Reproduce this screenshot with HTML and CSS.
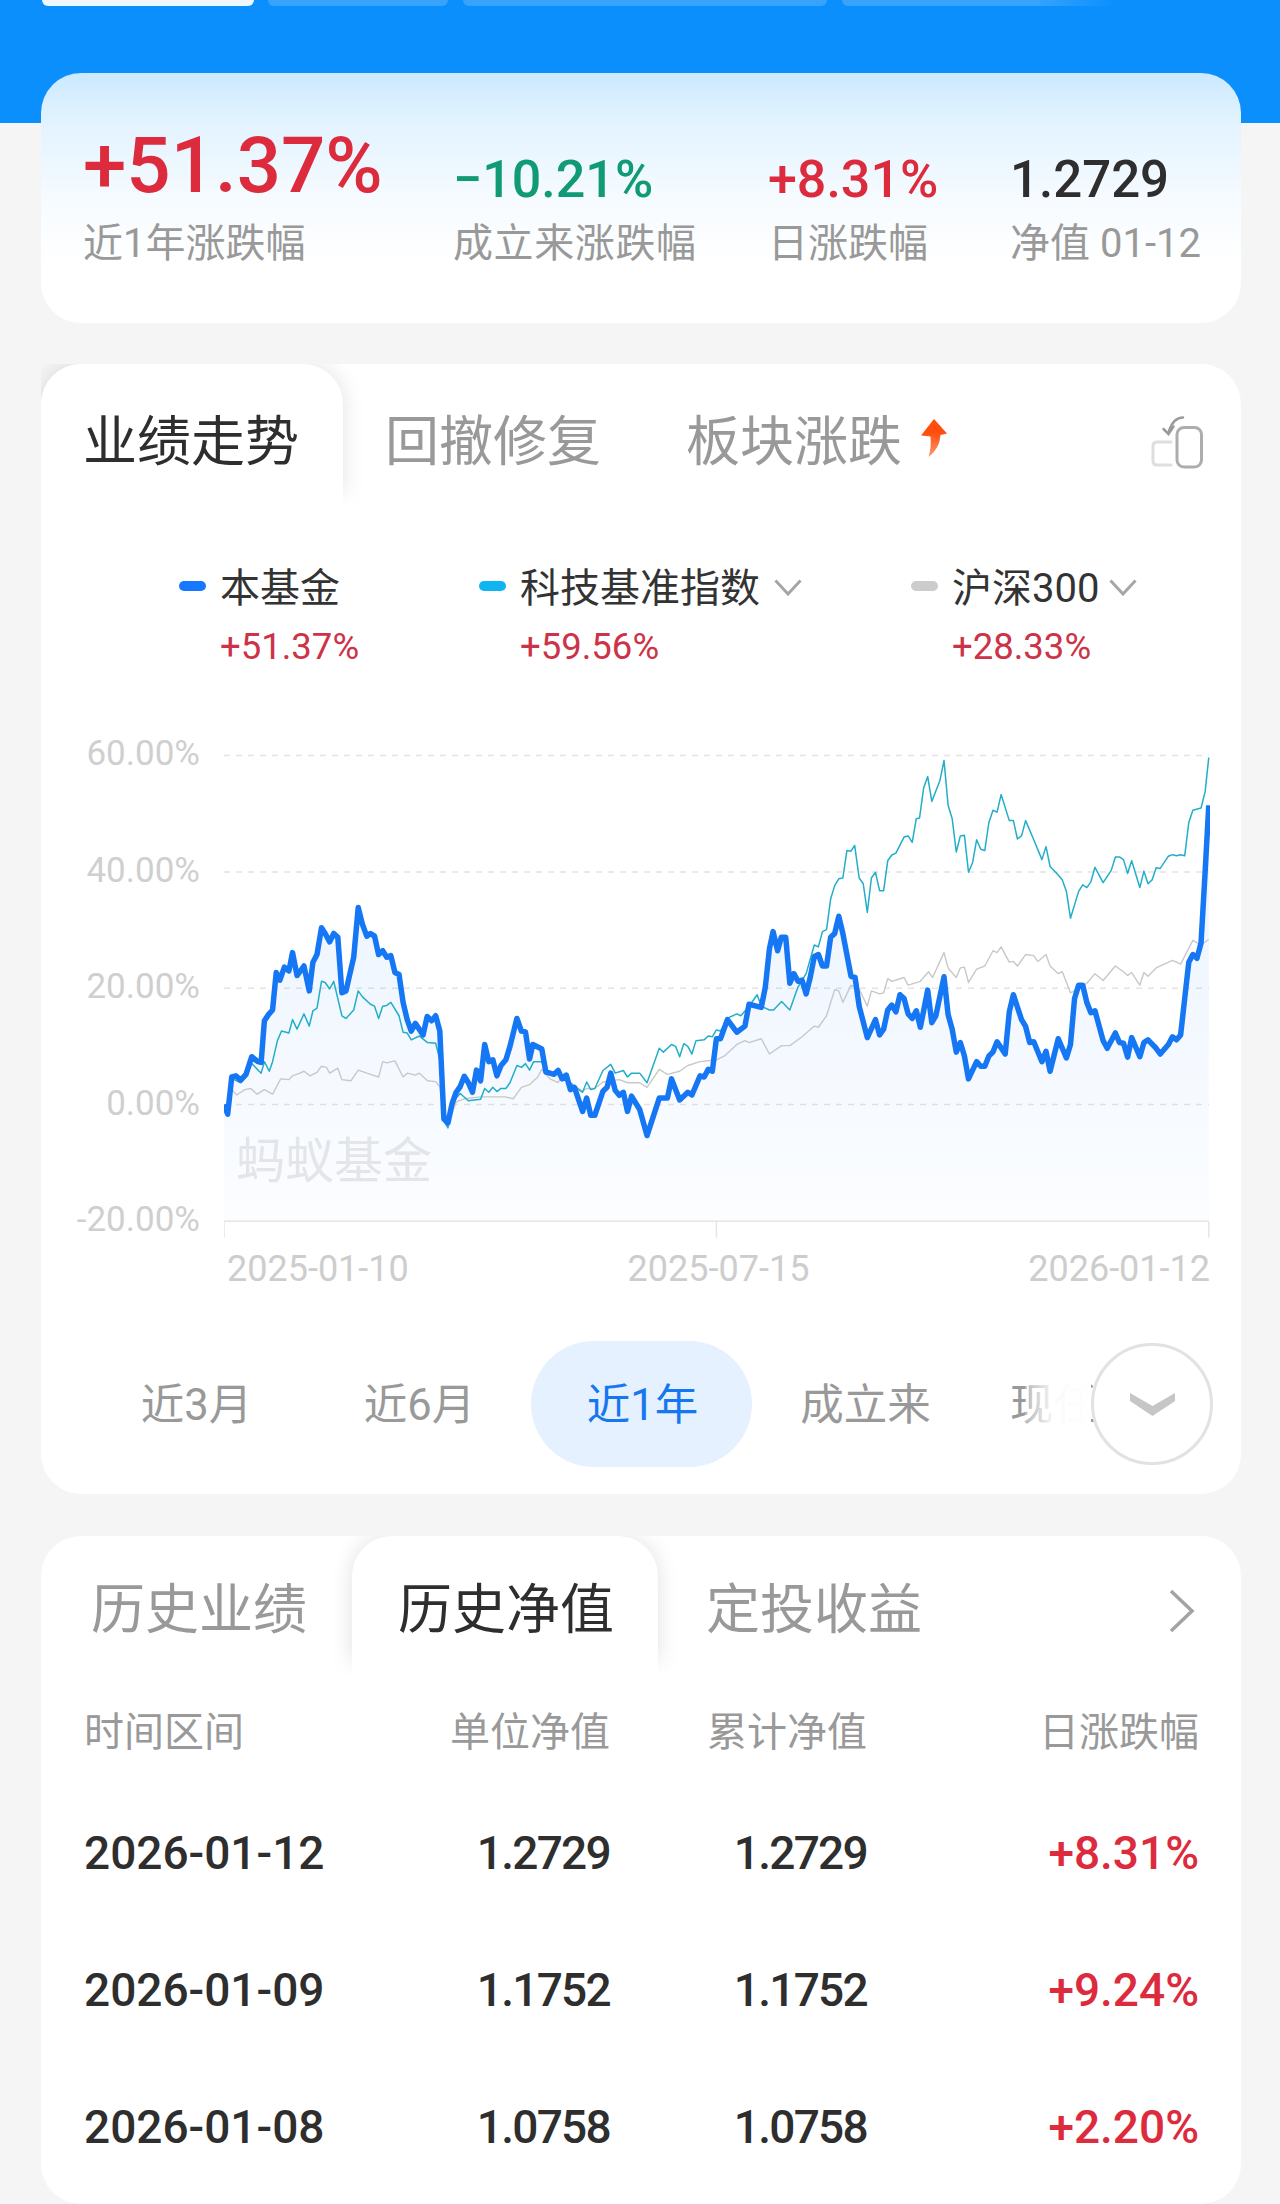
FILE: index.html
```html
<!DOCTYPE html>
<html lang="zh-CN">
<head>
  <meta charset="UTF-8">
  <title>基金详情</title>
  <link rel="stylesheet" href="styles.css">
</head>
<body>

<div class="cabecera">
  <div class="pestanas">
    <span class="pestana activa"></span>
    <span class="pestana ancho-180"></span>
    <span class="pestana ancho-364"></span>
    <span class="pestana ultima"></span>
  </div>
</div>

<section class="tarjeta resumen">
  <div class="dato col-1">
    <div class="valor grande rojo">+51.37%</div>
    <div class="etiqueta">近1年涨跌幅</div>
  </div>
  <div class="dato col-2">
    <div class="valor verde">−10.21%</div>
    <div class="etiqueta">成立来涨跌幅</div>
  </div>
  <div class="dato col-3">
    <div class="valor rojo">+8.31%</div>
    <div class="etiqueta">日涨跌幅</div>
  </div>
  <div class="dato col-4">
    <div class="valor oscuro">1.2729</div>
    <div class="etiqueta">净值 01-12</div>
  </div>
</section>

<section class="tarjeta grafica">
  <div class="tabs tabs-grafica">
    <div class="tab on primera">业绩走势</div>
    <div class="tab segunda">回撤修复</div>
    <div class="tab tercera">板块涨跌</div>
    <svg class="flecha" viewBox="0 0 28 40" width="28" height="40">
      <defs>
        <linearGradient id="naranja" x1="0" y1="0" x2="0" y2="1">
          <stop offset="0.35" stop-color="#ff4d0d"/>
          <stop offset="1" stop-color="#ff9a70"/>
        </linearGradient>
      </defs>
      <path d="M14 1 L27 15.500 L20.500 17 C20 26 16 33 8.500 39 C11 31 11 24 10.500 18.500 L1 17.500 Z" fill="url(#naranja)"/>
    </svg>
    <svg class="girar" viewBox="0 0 54 56" width="54" height="56" fill="none" stroke-linecap="round">
      <rect x="26" y="13.500" width="24.500" height="39.500" rx="7" stroke="#adadad" stroke-width="3"/>
      <path d="M20 28 H6 Q2 28 2 32 V47 Q2 51 6 51 H20" stroke="#dedede" stroke-width="3"/>
      <path d="M32 3.500 C25 3.500 21 8 18 17" stroke="#9a9a9a" stroke-width="2.500"/>
      <path d="M12.500 15 L17.500 20 L22.500 12.500" stroke="#9a9a9a" stroke-width="2.500"/>
    </svg>
  </div>

  <div class="leyenda">
    <div class="serie s1">
      <span class="punto azul"></span>
      <span class="nombre">本基金</span>
      <span class="cambio">+51.37%</span>
    </div>
    <div class="serie s2">
      <span class="punto cian"></span>
      <span class="nombre">科技基准指数
        <svg class="bajar" viewBox="0 0 28 17" width="28" height="17"><path d="M1.500 1.500 L14 15 L26.500 1.500" fill="none" stroke="#a6a6a6" stroke-width="3"/></svg>
      </span>
      <span class="cambio">+59.56%</span>
    </div>
    <div class="serie s3">
      <span class="punto gris"></span>
      <span class="nombre">沪深300
        <svg class="bajar" viewBox="0 0 28 17" width="28" height="17"><path d="M1.500 1.500 L14 15 L26.500 1.500" fill="none" stroke="#a6a6a6" stroke-width="3"/></svg>
      </span>
      <span class="cambio">+28.33%</span>
    </div>
  </div>

  <div class="zona-grafica">
    <div class="eje-y">
      <span>60.00%</span>
      <span>40.00%</span>
      <span>20.00%</span>
      <span>0.00%</span>
      <span>-20.00%</span>
    </div>
    <div class="plano">
      <svg class="lineas" viewBox="549 -8 2417 1419" preserveAspectRatio="none">
        <defs>
          <linearGradient id="relleno" x1="0" y1="0" x2="0" y2="1">
            <stop offset="0" stop-color="#1677ff" stop-opacity="0.09"/>
            <stop offset="1" stop-color="#1677ff" stop-opacity="0.015"/>
          </linearGradient>
        </defs>
        <g class="rejilla">
          <line x1="549" y1="145" x2="2963" y2="145"/>
          <line x1="549" y1="449" x2="2963" y2="449"/>
          <line x1="549" y1="753" x2="2963" y2="753"/>
          <line x1="549" y1="1057" x2="2963" y2="1057"/>
        </g>
        <polygon fill="url(#relleno)" points="549,1362 549,1057 558,1082 568,985 578,982 590,993 603,978 617,932 632,945 640,947 648,838 658,822 668,810 677,712 686,732 697,698 708,708 717,660 728,720 745,695 758,760 767,685 777,665 788,595 797,610 808,632 818,610 828,620 838,765 848,760 867,672 878,542 888,585 899,617 908,610 918,617 928,665 938,655 948,672 958,668 968,712 978,717 988,790 998,835 1008,865 1018,845 1037,875 1047,827 1058,838 1068,825 1078,865 1088,1095 1098,1105 1108,1055 1118,1025 1128,1010 1138,983 1148,1000 1158,1025 1168,967 1178,995 1188,900 1198,945 1208,940 1218,982 1228,955 1240,940 1250,905 1267,832 1278,865 1288,867 1298,938 1306,900 1328,912 1338,972 1348,975 1358,978 1368,968 1378,990 1388,980 1398,1018 1408,1012 1428,1075 1438,1040 1448,1085 1458,1085 1478,1022 1488,1012 1497,975 1508,1020 1518,1033 1528,1025 1538,1075 1548,1035 1568,1070 1586,1138 1616,1040 1636,1040 1646,990 1666,1045 1686,1025 1696,1032 1716,982 1726,985 1736,965 1746,970 1756,885 1766,885 1783,835 1806,868 1826,852 1836,795 1866,803 1876,750 1886,650 1895,605 1906,655 1915,620 1926,620 1936,740 1946,715 1956,735 1966,732 1976,768 1986,725 1996,670 2006,665 2016,695 2026,695 2036,620 2046,610 2056,565 2066,610 2086,722 2096,725 2106,800 2126,882 2146,835 2156,875 2166,860 2176,810 2186,797 2196,815 2206,770 2216,780 2226,820 2236,832 2246,812 2256,855 2274,758 2284,843 2294,825 2314,723 2324,822 2334,860 2344,920 2354,895 2364,930 2374,990 2394,945 2404,957 2414,957 2424,930 2434,920 2444,893 2464,925 2474,815 2484,770 2504,835 2514,853 2524,895 2534,893 2554,945 2564,918 2574,970 2594,885 2614,935 2624,900 2634,780 2644,745 2654,745 2664,790 2674,817 2684,812 2704,890 2714,910 2734,870 2744,895 2754,897 2764,933 2774,882 2794,932 2804,895 2814,888 2834,910 2844,925 2864,900 2874,880 2884,888 2894,875 2904,780 2914,685 2924,665 2934,675 2944,635 2954,450 2963,275 2963,1362"/>
        <polyline class="linea gris-l" points="570,1020 580,1032 600,1018 615,1015 630,1030 648,1018 668,1030 688,990 708,992 717,982 735,975 745,970 760,982 777,973 788,957 800,960 808,975 828,962 838,992 860,995 878,967 908,978 928,985 938,945 948,948 968,943 988,985 998,975 1018,980 1028,975 1048,995 1068,997 1078,1010 1088,1090 1098,1110 1118,1050 1138,1042 1178,1037 1238,1037 1258,1042 1278,1012 1298,1005 1318,985 1328,965 1348,990 1368,1000 1378,980 1398,1000 1428,1022 1438,1015 1458,1015 1478,998 1518,992 1538,1000 1568,1000 1586,1012 1616,965 1636,978 1666,970 1686,955 1716,945 1756,940 1776,930 1806,900 1826,890 1836,895 1866,885 1886,925 1916,903 1936,903 1966,880 1996,852 2006,855 2026,825 2046,757 2056,760 2066,790 2086,745 2106,755 2126,800 2136,760 2156,768 2166,765 2176,728 2186,735 2216,725 2226,745 2256,735 2276,710 2286,725 2314,660 2324,700 2344,725 2354,700 2364,698 2374,738 2394,703 2414,695 2434,655 2444,660 2454,645 2474,685 2484,683 2494,695 2514,665 2534,668 2544,683 2564,665 2574,695 2594,715 2604,710 2624,765 2644,755 2664,740 2684,715 2704,733 2734,695 2754,710 2764,720 2774,712 2794,745 2804,712 2814,722 2834,700 2874,680 2894,690 2924,628 2944,640 2963,625"/>
        <polyline class="linea cian-l" points="570,990 590,1000 603,985 617,950 640,975 648,945 660,970 668,945 680,890 690,865 708,870 717,835 728,860 745,820 758,852 767,812 777,805 788,735 797,738 808,755 818,735 838,825 848,832 867,810 878,760 888,775 908,795 918,800 928,832 938,800 948,798 958,790 978,825 988,868 998,870 1008,888 1028,878 1048,895 1068,897 1078,940 1088,1100 1098,1118 1108,1060 1118,1040 1128,1028 1148,1047 1178,1043 1188,1015 1198,1025 1208,1012 1218,1023 1228,1015 1240,1015 1250,1000 1267,955 1278,960 1288,950 1298,967 1308,945 1328,945 1338,972 1368,975 1388,990 1408,1010 1428,1025 1438,998 1448,1018 1458,1015 1478,968 1497,952 1508,975 1528,968 1538,985 1548,975 1568,975 1586,1000 1616,910 1626,920 1646,900 1656,905 1666,932 1676,898 1686,905 1696,925 1706,890 1726,888 1736,878 1746,880 1756,862 1766,865 1786,830 1806,820 1816,825 1836,800 1856,770 1866,800 1886,810 1896,810 1916,788 1936,810 1956,750 1976,715 1996,640 2006,645 2016,605 2026,600 2036,520 2046,485 2056,467 2066,465 2076,393 2086,395 2095,380 2106,465 2116,480 2126,555 2136,465 2146,450 2156,498 2166,498 2176,420 2186,405 2196,400 2216,358 2226,355 2236,372 2246,310 2254,308 2264,230 2274,200 2284,265 2304,210 2314,158 2324,275 2334,310 2344,397 2354,355 2364,353 2374,450 2384,425 2394,365 2404,390 2414,393 2424,320 2434,288 2444,293 2454,247 2474,315 2484,315 2494,363 2504,355 2514,315 2534,365 2554,417 2564,383 2574,435 2594,457 2604,470 2614,500 2624,570 2644,500 2654,483 2664,490 2674,475 2684,437 2704,477 2724,445 2734,410 2744,410 2754,417 2764,453 2774,420 2794,490 2804,447 2814,480 2824,470 2834,438 2844,440 2864,408 2874,404 2884,407 2894,404 2904,407 2914,320 2924,288 2944,282 2954,240 2963,150"/>
        <polyline class="linea azul-l" points="549,1057 558,1082 568,985 578,982 590,993 603,978 617,932 632,945 640,947 648,838 658,822 668,810 677,712 686,732 697,698 708,708 717,660 728,720 745,695 758,760 767,685 777,665 788,595 797,610 808,632 818,610 828,620 838,765 848,760 867,672 878,542 888,585 899,617 908,610 918,617 928,665 938,655 948,672 958,668 968,712 978,717 988,790 998,835 1008,865 1018,845 1037,875 1047,827 1058,838 1068,825 1078,865 1088,1095 1098,1105 1108,1055 1118,1025 1128,1010 1138,983 1148,1000 1158,1025 1168,967 1178,995 1188,900 1198,945 1208,940 1218,982 1228,955 1240,940 1250,905 1267,832 1278,865 1288,867 1298,938 1306,900 1328,912 1338,972 1348,975 1358,978 1368,968 1378,990 1388,980 1398,1018 1408,1012 1428,1075 1438,1040 1448,1085 1458,1085 1478,1022 1488,1012 1497,975 1508,1020 1518,1033 1528,1025 1538,1075 1548,1035 1568,1070 1586,1138 1616,1040 1636,1040 1646,990 1666,1045 1686,1025 1696,1032 1716,982 1726,985 1736,965 1746,970 1756,885 1766,885 1783,835 1806,868 1826,852 1836,795 1866,803 1876,750 1886,650 1895,605 1906,655 1915,620 1926,620 1936,740 1946,715 1956,735 1966,732 1976,768 1986,725 1996,670 2006,665 2016,695 2026,695 2036,620 2046,610 2056,565 2066,610 2086,722 2096,725 2106,800 2126,882 2146,835 2156,875 2166,860 2176,810 2186,797 2196,815 2206,770 2216,780 2226,820 2236,832 2246,812 2256,855 2274,758 2284,843 2294,825 2314,723 2324,822 2334,860 2344,920 2354,895 2364,930 2374,990 2394,945 2404,957 2414,957 2424,930 2434,920 2444,893 2464,925 2474,815 2484,770 2504,835 2514,853 2524,895 2534,893 2554,945 2564,918 2574,970 2594,885 2614,935 2624,900 2634,780 2644,745 2654,745 2664,790 2674,817 2684,812 2704,890 2714,910 2734,870 2744,895 2754,897 2764,933 2774,882 2794,932 2804,895 2814,888 2834,910 2844,925 2864,900 2874,880 2884,888 2894,875 2904,780 2914,685 2924,665 2934,675 2944,635 2954,450 2963,275"/>
        <g class="eje-x">
          <line x1="549" y1="1362" x2="2963" y2="1362"/>
          <line x1="549" y1="1362" x2="549" y2="1405"/>
          <line x1="1756" y1="1362" x2="1756" y2="1405"/>
          <line x1="2963" y1="1362" x2="2963" y2="1405"/>
        </g>
      </svg>
      <div class="marca">蚂蚁基金</div>
      <div class="fechas">
        <span>2025-01-10</span>
        <span>2025-07-15</span>
        <span>2026-01-12</span>
      </div>
    </div>
  </div>

  <div class="periodos">
    <div class="periodo">近3月</div>
    <div class="periodo">近6月</div>
    <div class="periodo sel">近1年</div>
    <div class="periodo">成立来</div>
    <div class="periodo resto">现任经理</div>
    <div class="desvanecer"></div>
    <div class="circulo">
      <svg viewBox="0 0 45 23" width="45" height="23"><polygon points="0,0 22.500,13 45,0 45,8 22.500,23 0,8" fill="#c6c6c6"/></svg>
    </div>
  </div>
</section>

<section class="tarjeta historia">
  <div class="tabs tabs-historia">
    <div class="tab h-primera">历史业绩</div>
    <div class="tab on h-activa">历史净值</div>
    <div class="tab h-tercera">定投收益</div>
    <svg class="seguir" viewBox="0 0 28 44" width="28" height="44"><path d="M3 2 L24 22 L3 42" fill="none" stroke="#a3a3a3" stroke-width="3.500"/></svg>
  </div>

  <div class="fila cabeza">
    <div>时间区间</div>
    <div>单位净值</div>
    <div>累计净值</div>
    <div>日涨跌幅</div>
  </div>
  <div class="fila">
    <div>2026-01-12</div>
    <div class="neto">1.2729</div>
    <div class="neto">1.2729</div>
    <div class="rojo">+8.31%</div>
  </div>
  <div class="fila">
    <div>2026-01-09</div>
    <div class="neto">1.1752</div>
    <div class="neto">1.1752</div>
    <div class="rojo">+9.24%</div>
  </div>
  <div class="fila">
    <div>2026-01-08</div>
    <div class="neto">1.0758</div>
    <div class="neto">1.0758</div>
    <div class="rojo">+2.20%</div>
  </div>
</section>

</body>
</html>
```

FILE: styles.css
```css
* {
  box-sizing: border-box;
}
html, body {
  margin: 0;
  padding: 0;
}
body {
  width: 1280px;
  height: 2204px;
  overflow: hidden;
  background: #f5f5f5;
  color: #333;
  font-family: Roboto, "Noto Sans CJK SC", sans-serif;
}

.rojo { color: #dd2b3e; }
.verde { color: #109a75; }
.oscuro { color: #2e2e2e; }

/* cabecera azul */
.cabecera {
  height: 123px;
  background: #0b8ffc;
}
.pestanas {
  display: flex;
  gap: 15px;
  padding-left: 42px;
}
.pestana {
  height: 6px;
  width: 212px;
  border-radius: 0 0 12px 12px;
  background: rgba(255, 255, 255, .18);
}
.pestana.activa { background: #eef6fe; margin-right: -1px; }
.pestana.ancho-180 { width: 180px; }
.pestana.ancho-364 { width: 364px; }
.pestana.ultima {
  width: 276px;
  background: linear-gradient(to right, rgba(255,255,255,.18) 70%, rgba(255,255,255,0));
}

.tarjeta {
  width: 1200px;
  margin-left: 41px;
  background: #fff;
  border-radius: 40px;
}

/* resumen */
.resumen {
  margin-top: -50px;
  height: 250px;
  padding: 0 0 55px 42px;
  display: flex;
  align-items: flex-end;
  background: linear-gradient(to bottom, #cbe9ff 0, #e3f3ff 50px, #f6fbff 125px, #fff 190px);
}
.col-1 { width: 369px; }
.col-2 { width: 315px; margin-left: 1px; }
.col-2 .etiqueta { letter-spacing: .6px; }
.col-3 { width: 242px; }
.valor {
  font-size: 52px;
  font-weight: 500;
  line-height: 56px;
  margin-bottom: 9px;
  white-space: nowrap;
}
.valor.oscuro { font-size: 51px; }
.valor.grande {
  font-size: 78px;
  line-height: 80px;
  margin-bottom: 11px;
}
.etiqueta {
  font-size: 40px;
  line-height: 48px;
  padding-top: 3px;
  color: #999;
  white-space: nowrap;
}

/* pestañas */
.tabs {
  display: flex;
  align-items: center;
  position: relative;
}
.tab {
  font-size: 54px;
  line-height: 60px;
  padding-top: 5px;
  color: #999;
  white-space: nowrap;
}
.tab.on {
  color: #2e2e2e;
  position: relative;
  align-self: stretch;
  display: flex;
  align-items: center;
  background: #fff;
  border-radius: 40px 40px 0 0;
  box-shadow: 0 0 22px rgba(0, 0, 0, .12);
  clip-path: inset(0 -40px 0 -40px);
}
/* la sombra se apaga hacia abajo */
.tab.on::after {
  content: "";
  position: absolute;
  left: -40px;
  right: -40px;
  bottom: 0;
  height: 34px;
  background: linear-gradient(to bottom, rgba(255,255,255,0), #fff 90%);
}

.grafica { margin-top: 41px; height: 1130px; }
.tabs-grafica {
  height: 152px;
  padding-right: 36px;
}
.tabs-grafica .tab.on {
  height: 146px;
  align-self: flex-start;
  clip-path: inset(0 -40px 0 0);
}
.primera { padding: 11px 44px 0 42px; }
.segunda { padding-left: 42px; }
.tercera { padding-left: 85px; }
.flecha { margin-left: 18px; margin-top: -4px; }
.girar { margin-left: auto; margin-top: 4px; }

/* leyenda */
.leyenda {
  display: flex;
  margin-top: 49px;
  padding-left: 138px;
}
.serie {
  display: grid;
  grid-template-columns: 27px auto;
  column-gap: 14px;
  align-items: center;
  align-content: start;
}
.s1 { width: 300px; }
.s2 { width: 432px; }
.s3 .bajar { margin-left: 10px; }
.punto {
  height: 10px;
  border-radius: 5px;
  margin-top: -6px;
}
.azul { background: #1677ff; }
.cian { background: #10b4f1; }
.gris { background: #ccc; }
.nombre {
  font-size: 40px;
  line-height: 48px;
  color: #333;
  display: flex;
  align-items: center;
  white-space: nowrap;
}
.bajar { margin-left: 14px; margin-top: -4px; }
.cambio {
  grid-column: 2;
  font-size: 36.500px;
  line-height: 44px;
  margin-top: 12px;
  color: #cc3348;
}

/* grafica */
.zona-grafica {
  display: grid;
  grid-template-columns: 159px 986px;
  column-gap: 24px;
  margin-top: 28px;
}
.eje-y {
  display: flex;
  flex-direction: column;
  align-items: flex-end;
}
.eje-y span {
  height: 116.500px;
  line-height: 113px;
  font-size: 35px;
  color: #cfcfcf;
}
.plano {
  position: relative;
}
.lineas {
  display: block;
  width: 986px;
  height: 543px;
}
.rejilla line {
  stroke: #e4e4e4;
  stroke-width: 1.500;
  stroke-dasharray: 6 6;
  vector-effect: non-scaling-stroke;
}
.eje-x line {
  stroke: #e6e6e6;
  stroke-width: 1.500;
  vector-effect: non-scaling-stroke;
}
.linea {
  fill: none;
  stroke-linejoin: round;
  vector-effect: non-scaling-stroke;
}
.azul-l { stroke: #1677f5; stroke-width: 5.500px; }
.cian-l { stroke: #22aec8; stroke-width: 1.500px; }
.gris-l { stroke: #c8c8c8; stroke-width: 1.400px; }
.marca {
  position: absolute;
  left: 12px;
  top: 435px;
  font-size: 49px;
  line-height: 60px;
  color: #e3e5e8;
  white-space: nowrap;
}
.fechas {
  display: flex;
  justify-content: space-between;
  margin-top: 7px;
  padding-left: 3px;
  font-size: 36px;
  line-height: 44px;
  color: #cdcdcd;
}

/* periodos */
.periodos {
  position: relative;
  display: flex;
  gap: 2px;
  height: 126px;
  margin-top: 50px;
  padding-left: 44px;
  align-items: center;
  font-size: 43.500px;
  color: #999;
  overflow: hidden;
}
.periodo {
  width: 221px;
  flex: none;
  height: 126px;
  line-height: 130px;
  padding-left: 2px;
  text-align: center;
  border-radius: 63px;
}
.periodo.sel {
  background: #e6f1ff;
  color: #1677f0;
}
.periodo.resto {
  width: auto;
  padding-left: 33px;
  white-space: nowrap;
}
.desvanecer {
  position: absolute;
  top: 0;
  bottom: 0;
  left: 984px;
  width: 66px;
  background: linear-gradient(to right, rgba(255,255,255,.3), rgba(255,255,255,.95) 45%, #fff);
}
.circulo {
  position: absolute;
  right: 28px;
  top: 2px;
  width: 122px;
  height: 122px;
  border: 3px solid #e2e2e2;
  border-radius: 50%;
  background: #fff;
  display: flex;
  align-items: center;
  justify-content: center;
}

/* historial */
.historia {
  margin-top: 42px;
  height: 668px;
  overflow: hidden;
}
.tabs-historia {
  height: 144px;
  padding-right: 45px;
}
.h-primera { padding: 5px 45px 0 50px; }
.h-activa { padding: 5px 44px 0 46px; }
.h-tercera { padding-left: 48px; }
.seguir { margin-left: auto; margin-top: 6px; }

.fila {
  display: grid;
  grid-template-columns: 280px 246px 257px 332px;
  padding-left: 43px;
  height: 137px;
  align-items: center;
  font-size: 46px;
  font-weight: 500;
  color: #2e2e2e;
  white-space: nowrap;
}
.fila div + div { text-align: right; }
.fila .neto { letter-spacing: -1.700px; }
.fila .rojo { color: #dd2b3e; }
.fila.cabeza {
  height: 48px;
  margin: 20px 0 36px;
  font-size: 40px;
  font-weight: 400;
  color: #999;
}
```
